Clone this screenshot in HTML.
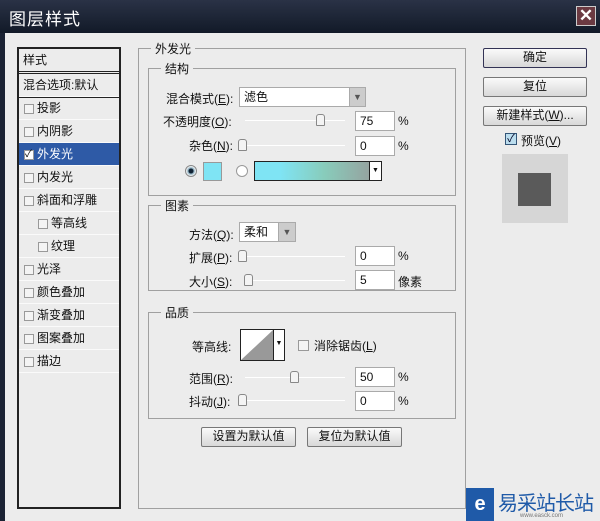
<!DOCTYPE html><html><head><meta charset="utf-8"><style>
*{box-sizing:border-box;margin:0;padding:0}
body{width:600px;height:521px;background:#ececec;position:relative;overflow:hidden;font-family:"Liberation Sans","Noto Sans CJK SC",sans-serif;font-size:12px;color:#111}
.a{position:absolute}
.title{left:0;top:0;width:600px;height:33px;background:linear-gradient(#2a3246,#121a28);color:#fff;font-size:17px;padding:5px 0 0 9px;letter-spacing:1px}
.close{right:4px;top:6px;width:20px;height:20px;background:#6b3a42;border:1px solid #ccc;color:#fff;font-size:17px;line-height:17px;text-align:center;font-weight:bold}
.lframe{left:0;top:33px;width:5px;height:488px;background:#1a2233}
.list{left:17px;top:47px;width:104px;height:462px;border:2px solid #222;background:#ececec}
.row{position:absolute;left:0;width:100px;height:23px;line-height:22px;border-bottom:1px solid #fafafa;padding-left:18px}
.cb{position:absolute;width:10px;height:10px;border:1px solid #999;background:#f4f4f4;top:7px;left:5px}
.sel{background:#2e5aa6;color:#fff}
.box{border:1px solid #999;border-right-color:#fff;border-bottom-color:#fff;box-shadow:1px 1px 0 #999 inset, 0 0 0 0}
.grp{border:1px solid #a0a0a0}
.lg{background:#ececec;padding:0 4px}
.inp{background:#fff;border:1px solid #aaa;height:20px;line-height:18px;padding-left:4px}
.sl{height:1px;background:#bbb;border-bottom:1px solid #fff}
.th{width:9px;height:12px;border:1px solid #888;border-radius:3px 3px 1px 1px;background:#f4f4f4}
.btn{border:1px solid #777;border-radius:2px;background:linear-gradient(#fafafa,#d8d8d8);text-align:center;line-height:17px}
u{text-decoration:underline}
</style></head><body>
<div class="a title">图层样式</div>
<div class="a close">✕</div>
<div class="a lframe"></div>
<div class="a list">
 <div class="row" style="top:0;padding-left:4px;height:23px">样式</div>
 <div class="a" style="left:0;top:22px;width:100px;height:3px;border-top:1px solid #222;border-bottom:1px solid #222"></div>
 <div class="row" style="top:25px;padding-left:4px;height:23px">混合选项:默认</div>
 <div class="a" style="left:0;top:48px;width:100px;height:1px;background:#222"></div>
 <div class="row" style="top:48px"><span class="cb"></span>投影</div>
 <div class="row" style="top:71px"><span class="cb"></span>内阴影</div>
 <div class="row sel" style="top:94px"><span class="cb" style="background:#fff;font-size:10px;line-height:8px;color:#000">✓</span>外发光</div>
 <div class="row" style="top:117px"><span class="cb"></span>内发光</div>
 <div class="row" style="top:140px"><span class="cb"></span>斜面和浮雕</div>
 <div class="row" style="top:163px;padding-left:32px"><span class="cb" style="left:19px"></span>等高线</div>
 <div class="row" style="top:186px;padding-left:32px"><span class="cb" style="left:19px"></span>纹理</div>
 <div class="row" style="top:209px"><span class="cb"></span>光泽</div>
 <div class="row" style="top:232px"><span class="cb"></span>颜色叠加</div>
 <div class="row" style="top:255px"><span class="cb"></span>渐变叠加</div>
 <div class="row" style="top:278px"><span class="cb"></span>图案叠加</div>
 <div class="row" style="top:301px"><span class="cb"></span>描边</div>
</div>

<div class="a grp" style="left:138px;top:48px;width:328px;height:461px"></div>
<div class="a lg" style="left:151px;top:40px">外发光</div>

<div class="a grp" style="left:148px;top:68px;width:308px;height:128px"></div>
<div class="a lg" style="left:161px;top:60px">结构</div>
<div class="a" style="left:166px;top:90px">混合模式(<u>E</u>):</div>
<div class="a inp" style="left:239px;top:87px;width:127px">滤色</div>
<div class="a" style="left:349px;top:88px;width:16px;height:18px;background:#ccc;border-left:1px solid #aaa;color:#555;font-size:9px;text-align:center;line-height:18px">▼</div>
<div class="a" style="left:163px;top:113px">不透明度(<u>O</u>):</div>
<div class="a sl" style="left:245px;top:120px;width:100px"></div>
<div class="a th" style="left:316px;top:114px"></div>
<div class="a inp" style="left:355px;top:111px;width:40px">75</div>
<div class="a" style="left:398px;top:114px">%</div>
<div class="a" style="left:189px;top:137px">杂色(<u>N</u>):</div>
<div class="a sl" style="left:245px;top:145px;width:100px"></div>
<div class="a th" style="left:238px;top:139px"></div>
<div class="a inp" style="left:355px;top:136px;width:40px">0</div>
<div class="a" style="left:398px;top:139px">%</div>
<div class="a" style="left:185px;top:165px;width:12px;height:12px;border-radius:50%;border:1px solid #888;background:radial-gradient(#123 30%,#8ab 40%,#fff 70%)"></div>
<div class="a" style="left:203px;top:162px;width:19px;height:19px;background:#7fe4f4;border:1px solid #999"></div>
<div class="a" style="left:236px;top:165px;width:12px;height:12px;border-radius:50%;border:1px solid #999;background:#fff"></div>
<div class="a" style="left:254px;top:161px;width:128px;height:20px;border:1px solid #222;background:linear-gradient(90deg,#7fe4f4 20%,#8cb 55%,#999 100%)"></div>
<div class="a" style="left:369px;top:162px;width:12px;height:18px;background:#fff;border-left:1px solid #222;font-size:7px;text-align:center;line-height:18px">▼</div>

<div class="a grp" style="left:148px;top:205px;width:308px;height:86px"></div>
<div class="a lg" style="left:161px;top:197px">图素</div>
<div class="a" style="left:189px;top:226px">方法(<u>Q</u>):</div>
<div class="a inp" style="left:239px;top:222px;width:57px">柔和</div>
<div class="a" style="left:278px;top:223px;width:17px;height:18px;background:#ccc;border-left:1px solid #aaa;color:#555;font-size:9px;text-align:center;line-height:18px">▼</div>
<div class="a" style="left:189px;top:249px">扩展(<u>P</u>):</div>
<div class="a sl" style="left:245px;top:256px;width:100px"></div>
<div class="a th" style="left:238px;top:250px"></div>
<div class="a inp" style="left:355px;top:246px;width:40px">0</div>
<div class="a" style="left:398px;top:249px">%</div>
<div class="a" style="left:189px;top:273px">大小(<u>S</u>):</div>
<div class="a sl" style="left:245px;top:280px;width:100px"></div>
<div class="a th" style="left:244px;top:274px"></div>
<div class="a inp" style="left:355px;top:270px;width:40px">5</div>
<div class="a" style="left:398px;top:273px">像素</div>

<div class="a grp" style="left:148px;top:312px;width:308px;height:107px"></div>
<div class="a lg" style="left:161px;top:304px">品质</div>
<div class="a" style="left:192px;top:338px">等高线:</div>
<div class="a" style="left:240px;top:329px;width:45px;height:32px;border:1px solid #222;background:#fff">
<svg width="32" height="30" style="position:absolute;left:0;top:0"><polygon points="0,30 32,0 32,30" fill="#999"/></svg>
<div style="position:absolute;left:32px;top:0;width:11px;height:30px;border-left:1px solid #222;font-size:7px;text-align:center;line-height:28px">▼</div></div>
<div class="a" style="left:298px;top:340px;width:11px;height:11px;border:1px solid #999;background:#f4f4f4"></div>
<div class="a" style="left:314px;top:337px">消除锯齿(<u>L</u>)</div>
<div class="a" style="left:189px;top:370px">范围(<u>R</u>):</div>
<div class="a sl" style="left:245px;top:377px;width:100px"></div>
<div class="a th" style="left:290px;top:371px"></div>
<div class="a inp" style="left:355px;top:367px;width:40px">50</div>
<div class="a" style="left:398px;top:370px">%</div>
<div class="a" style="left:189px;top:393px">抖动(<u>J</u>):</div>
<div class="a sl" style="left:245px;top:400px;width:100px"></div>
<div class="a th" style="left:238px;top:394px"></div>
<div class="a inp" style="left:355px;top:391px;width:40px">0</div>
<div class="a" style="left:398px;top:394px">%</div>
<div class="a btn" style="left:201px;top:427px;width:95px;height:20px">设置为默认值</div>
<div class="a btn" style="left:307px;top:427px;width:95px;height:20px">复位为默认值</div>

<div class="a btn" style="left:483px;top:48px;width:104px;height:20px;border-color:#335">确定</div>
<div class="a btn" style="left:483px;top:77px;width:104px;height:20px">复位</div>
<div class="a btn" style="left:483px;top:106px;width:104px;height:20px">新建样式(<u>W</u>)...</div>
<div class="a" style="left:505px;top:133px;width:12px;height:12px;border:1px solid #357;background:#bde;font-size:11px;line-height:10px;color:#002;text-align:center">✓</div>
<div class="a" style="left:521px;top:132px">预览(<u>V</u>)</div>
<div class="a" style="left:502px;top:154px;width:66px;height:69px;background:#d6d6d6"></div>
<div class="a" style="left:518px;top:173px;width:33px;height:33px;background:#5a5a5a"></div>

<div class="a" style="left:466px;top:488px;width:28px;height:33px;background:#1f5aa8;color:#fff;font-size:20px;text-align:center;line-height:33px;font-weight:bold">e</div>
<div class="a" style="left:498px;top:487px;color:#1f5aa8;font-size:20px;letter-spacing:-1px">易采站长站</div>
<div class="a" style="left:520px;top:513px;color:#777;font-size:6px">www.easck.com</div>
</body></html>
